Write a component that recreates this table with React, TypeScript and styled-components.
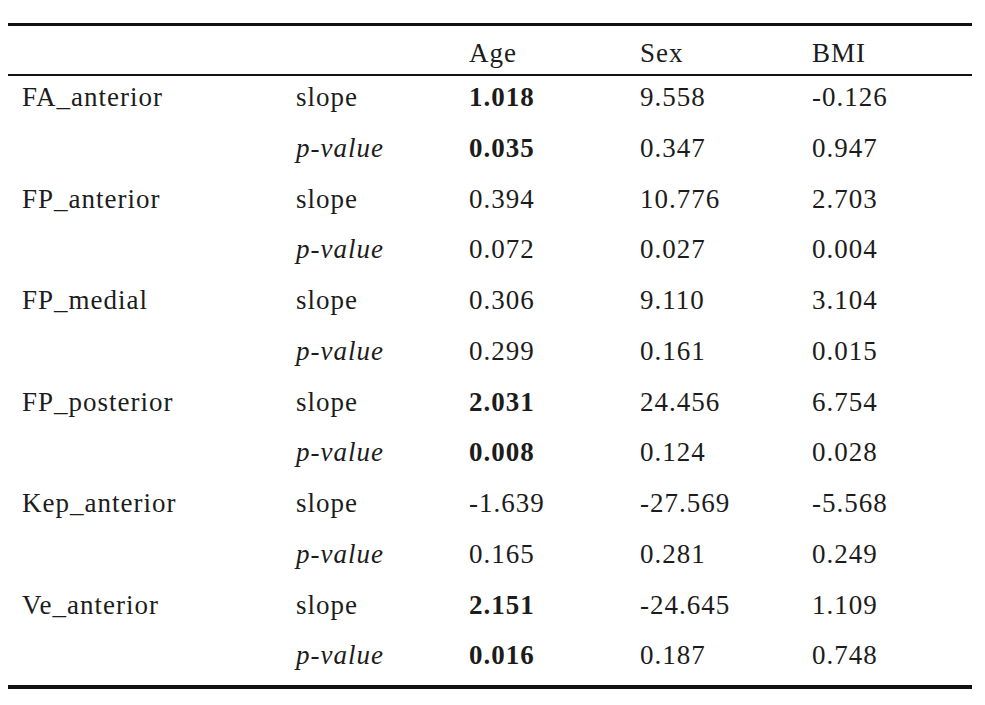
import styled, { createGlobalStyle } from "styled-components";

const GlobalStyle = createGlobalStyle`
  html, body {
    margin: 0;
    padding: 0;
    background: #fff;
  }
  body {
    width: 985px;
    height: 705px;
    overflow: hidden;
  }
`;

interface RowData {
  region: string;
  slope: string[];
  pvalue: string[];
  bold?: boolean;
}

const rows: RowData[] = [
  { region: "FA_anterior", slope: ["1.018", "9.558", "-0.126"], pvalue: ["0.035", "0.347", "0.947"], bold: true },
  { region: "FP_anterior", slope: ["0.394", "10.776", "2.703"], pvalue: ["0.072", "0.027", "0.004"] },
  { region: "FP_medial", slope: ["0.306", "9.110", "3.104"], pvalue: ["0.299", "0.161", "0.015"] },
  { region: "FP_posterior", slope: ["2.031", "24.456", "6.754"], pvalue: ["0.008", "0.124", "0.028"], bold: true },
  { region: "Kep_anterior", slope: ["-1.639", "-27.569", "-5.568"], pvalue: ["0.165", "0.281", "0.249"] },
  { region: "Ve_anterior", slope: ["2.151", "-24.645", "1.109"], pvalue: ["0.016", "0.187", "0.748"], bold: true },
];

const App = () => {
  return (
    <Page>
      <GlobalStyle />
      <Table>
        <HeaderRow>
          <Cell $first />
          <Cell />
          <Cell>Age</Cell>
          <Cell>Sex</Cell>
          <Cell>BMI</Cell>
        </HeaderRow>
        {rows.map((r) => (
          <Group key={r.region}>
            <BodyRow>
              <Cell $first>{r.region}</Cell>
              <Cell>slope</Cell>
              {r.slope.map((v, i) => (
                <Cell key={i} $bold={r.bold && i === 0}>{v}</Cell>
              ))}
            </BodyRow>
            <BodyRow>
              <Cell $first />
              <Cell $italic>p-value</Cell>
              {r.pvalue.map((v, i) => (
                <Cell key={i} $bold={r.bold && i === 0}>{v}</Cell>
              ))}
            </BodyRow>
          </Group>
        ))}
      </Table>
    </Page>
  );
};

export default App;

const Page = styled.div`
  width: 985px;
  height: 705px;
  padding: 23px 0 0 8px;
  box-sizing: border-box;
  background: #fff;
`;

const Table = styled.div`
  width: 964px;
  display: flex;
  flex-direction: column;
  border-top: 3px solid #111;
  border-bottom: 4px solid #111;
  color: #1c1c1c;
  font-family: "Liberation Serif", "Times New Roman", serif;
  font-size: 27px;
  letter-spacing: 1px;
  line-height: 26px;
`;

const HeaderRow = styled.div`
  display: grid;
  grid-template-columns: 288px 173px 171px 172px 1fr;
  height: 50px;
  padding-top: 14px;
  box-sizing: border-box;
  border-bottom: 2px solid #111;
`;

const Group = styled.div`
  display: flex;
  flex-direction: column;
`;

const BodyRow = styled.div`
  display: grid;
  grid-template-columns: 288px 173px 171px 172px 1fr;
  height: 50.75px;
  padding-top: 8px;
  box-sizing: border-box;
`;

const Cell = styled.div<{ $first?: boolean; $bold?: boolean; $italic?: boolean }>`
  padding-left: ${(p) => (p.$first ? "14px" : "0")};
  font-weight: ${(p) => (p.$bold ? 700 : 400)};
  font-style: ${(p) => (p.$italic ? "italic" : "normal")};
  white-space: nowrap;
`;
